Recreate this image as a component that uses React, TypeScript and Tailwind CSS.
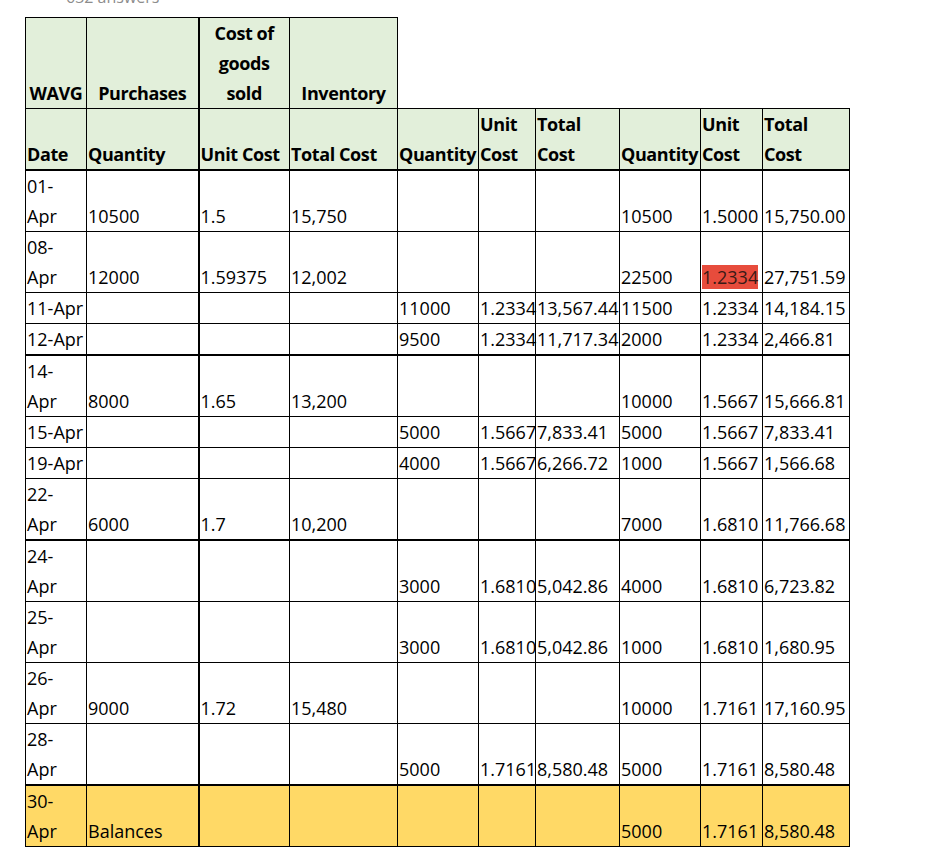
const widths = [61, 112, 91, 108, 81, 57, 84, 81, 62, 87]

type Row = {
  date: string[]
  cells: string[]
  thick?: boolean
  yellow?: boolean
  redAt?: number
}

const rows: Row[] = [
  { date: ['01-', 'Apr'], cells: ['10500', '1.5', '15,750', '', '', '', '10500', '1.5000', '15,750.00'] },
  { date: ['08-', 'Apr'], cells: ['12000', '1.59375', '12,002', '', '', '', '22500', '1.2334', '27,751.59'], redAt: 7 },
  { date: ['11-Apr'], cells: ['', '', '', '11000', '1.2334', '13,567.44', '11500', '1.2334', '14,184.15'] },
  { date: ['12-Apr'], cells: ['', '', '', '9500', '1.2334', '11,717.34', '2000', '1.2334', '2,466.81'], thick: true },
  { date: ['14-', 'Apr'], cells: ['8000', '1.65', '13,200', '', '', '', '10000', '1.5667', '15,666.81'] },
  { date: ['15-Apr'], cells: ['', '', '', '5000', '1.5667', '7,833.41', '5000', '1.5667', '7,833.41'] },
  { date: ['19-Apr'], cells: ['', '', '', '4000', '1.5667', '6,266.72', '1000', '1.5667', '1,566.68'] },
  { date: ['22-', 'Apr'], cells: ['6000', '1.7', '10,200', '', '', '', '7000', '1.6810', '11,766.68'], thick: true },
  { date: ['24-', 'Apr'], cells: ['', '', '', '3000', '1.6810', '5,042.86', '4000', '1.6810', '6,723.82'] },
  { date: ['25-', 'Apr'], cells: ['', '', '', '3000', '1.6810', '5,042.86', '1000', '1.6810', '1,680.95'] },
  { date: ['26-', 'Apr'], cells: ['9000', '1.72', '15,480', '', '', '', '10000', '1.7161', '17,160.95'] },
  { date: ['28-', 'Apr'], cells: ['', '', '', '5000', '1.7161', '8,580.48', '5000', '1.7161', '8,580.48'], thick: true },
  { date: ['30-', 'Apr'], cells: ['Balances', '', '', '', '', '', '5000', '1.7161', '8,580.48'], yellow: true },
]

const topHeads: string[][] = [['WAVG'], ['Purchases'], ['Cost of', 'goods', 'sold'], ['Inventory']]
const subHeads: string[][] = [
  ['Date'], ['Quantity'], ['Unit Cost'], ['Total Cost'],
  ['Quantity'], ['Unit', 'Cost'], ['Total', 'Cost'],
  ['Quantity'], ['Unit', 'Cost'], ['Total', 'Cost'],
]

function Lines({ lines }: { lines: string[] }) {
  return (
    <>
      {lines.map((l, i) => (
        <span key={i}>
          {i > 0 && <br />}
          {l}
        </span>
      ))}
    </>
  )
}

export default function App() {
  return (
    <div className="min-h-screen bg-white text-black" style={{ fontFamily: '"Open Sans", "Noto Sans", sans-serif' }}>
      <div className="flex h-[17px] pl-[66px]">
        <p className="-mt-[14px] text-[16px] leading-[22px] text-[#8c8c8c]">632 answers</p>
      </div>

      <table className="ml-[25px] w-[825px] table-fixed border-collapse text-[18px] leading-[30px]">
        <colgroup>
          {widths.map((w, i) => (
            <col key={i} style={{ width: w }} />
          ))}
        </colgroup>
        <tbody>
          <tr>
            {topHeads.map((h, i) => (
              <td
                key={i}
                className={`h-[90px] border border-black bg-[#e2efda] px-px text-center align-bottom font-bold tracking-[-0.4px] whitespace-nowrap ${i === 2 ? 'border-l-2' : ''}`}
              >
                <Lines lines={h} />
              </td>
            ))}
            <td colSpan={6} />
          </tr>
          <tr>
            {subHeads.map((h, i) => (
              <td
                key={i}
                className={`h-[60px] overflow-visible border border-b-2 border-black bg-[#e2efda] px-px text-left align-bottom font-bold tracking-[-0.4px] whitespace-nowrap ${i === 2 ? 'border-l-2' : ''}`}
              >
                <Lines lines={h} />
              </td>
            ))}
          </tr>
          {rows.map((r) => (
            <tr key={r.date.join('')} className={r.yellow ? 'bg-[#ffd966]' : ''}>
              <td
                className={`border border-black px-px align-bottom whitespace-nowrap ${r.date.length > 1 ? 'h-[60px]' : 'h-[30px]'} ${r.thick ? 'border-b-2' : ''}`}
              >
                <Lines lines={r.date} />
              </td>
              {r.cells.map((c, i) => (
                <td
                  key={i}
                  className={`overflow-visible border border-black px-px align-bottom whitespace-nowrap ${i === 1 ? 'border-l-2' : ''} ${r.thick ? 'border-b-2' : ''}`}
                >
                  {r.redAt === i ? <span className="bg-[#e74c3c] text-[#3a1a16]">{c}</span> : c}
                </td>
              ))}
            </tr>
          ))}
        </tbody>
      </table>
    </div>
  )
}
